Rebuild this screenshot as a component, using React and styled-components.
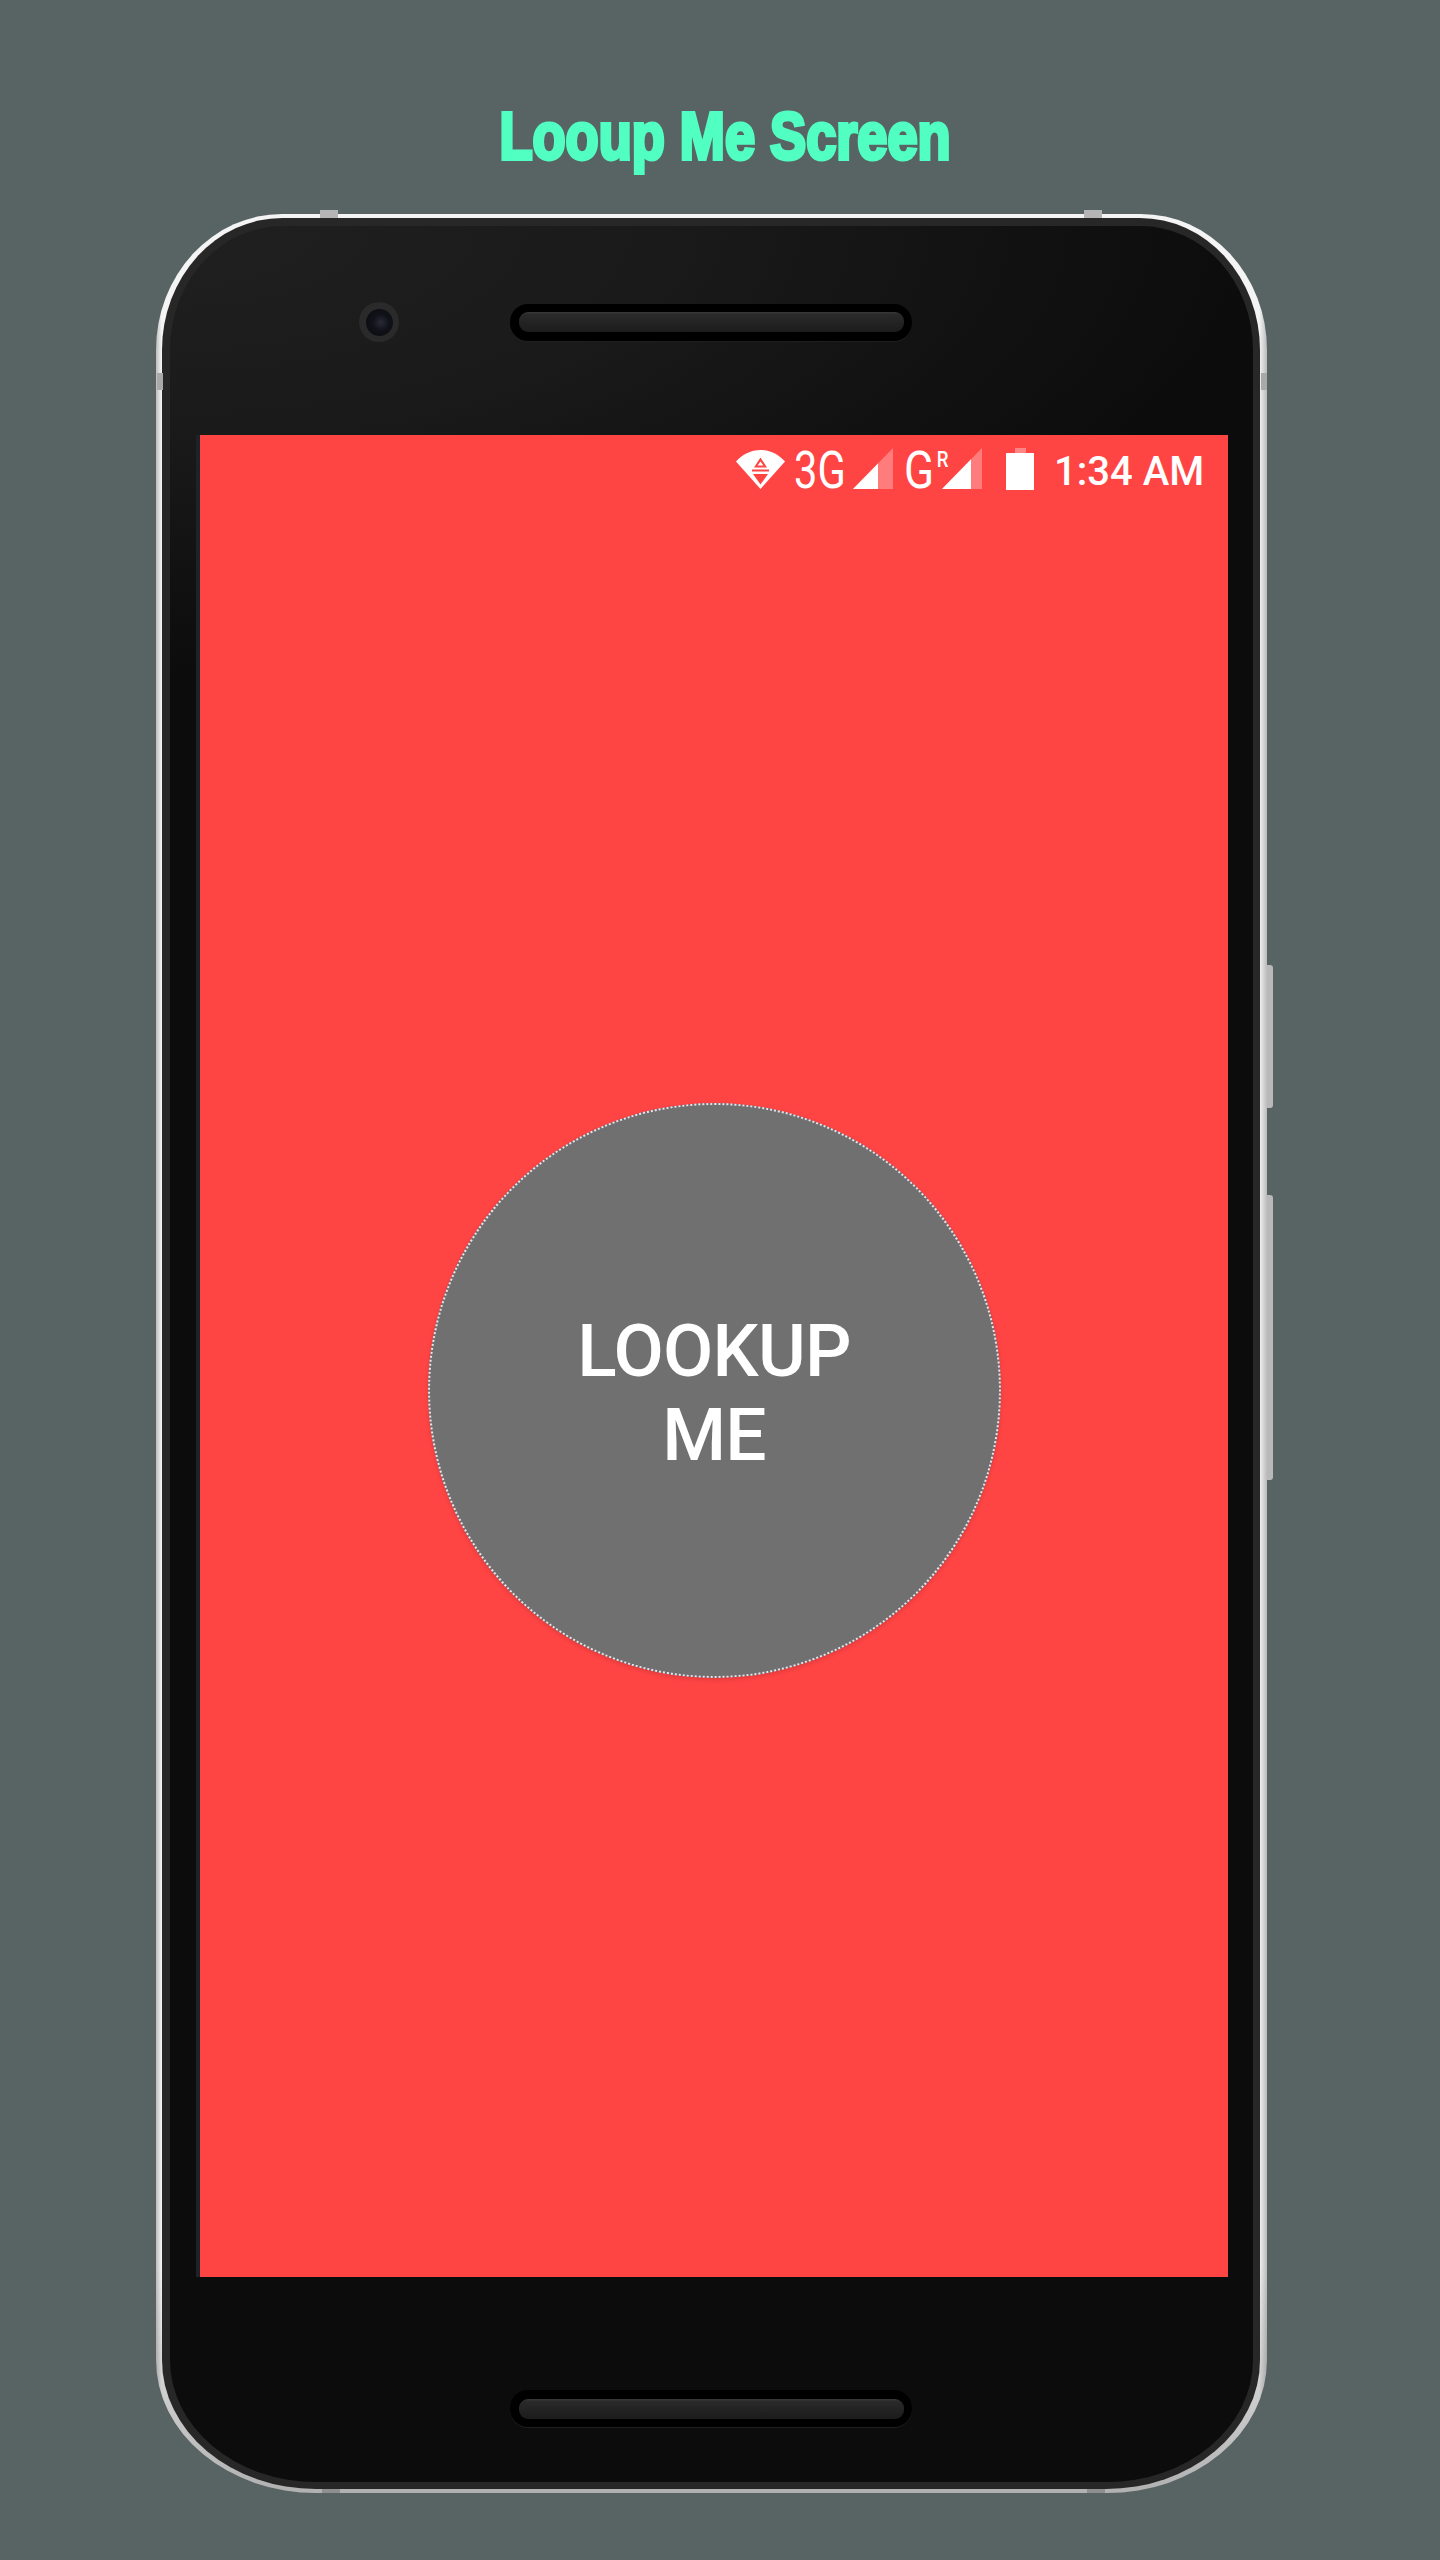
import React from "react";
import styled, { createGlobalStyle } from "styled-components";

const GlobalStyle = createGlobalStyle`
  html, body {
    margin: 0;
    padding: 0;
    background: #586463;
  }
`;

const App = () => {
  return (
    <Page>
      <GlobalStyle />
      <TitleBar>
        <Title>Looup Me Screen</Title>
      </TitleBar>
      <Rim>
        <TopNotch $left={164} />
        <TopNotch $left={928} />
        <BottomNotch $left={166} />
        <BottomNotch $left={931} />
        <SideMark $side="left" />
        <SideMark $side="right" />
        <SideButton $top={751} $height={143} />
        <SideButton $top={981} $height={285} />
        <Ring>
          <Bezel>
            <TopBezel>
              <Camera>
                <Lens />
              </Camera>
              <Speaker>
                <SpeakerGrille />
              </Speaker>
            </TopBezel>
            <Screen>
              <StatusBar>
                <WifiIcon />
                <NetworkLabel>3G</NetworkLabel>
                <SignalIcon split={25} />
                <CarrierLabel>
                  G<sup>R</sup>
                </CarrierLabel>
                <SignalIcon split={29} />
                <Battery>
                  <BatteryCap />
                  <BatteryBody />
                </Battery>
                <Clock>1:34 AM</Clock>
              </StatusBar>
              <Content>
                <LookupButton>
                  LOOKUP
                  <br />
                  ME
                </LookupButton>
              </Content>
            </Screen>
            <BottomBezel>
              <Speaker>
                <SpeakerGrille />
              </Speaker>
            </BottomBezel>
          </Bezel>
        </Ring>
      </Rim>
    </Page>
  );
};

const WifiIcon = () => (
  <WifiSvg viewBox="0 0 49 40">
    <path d="M0 12.5C7 5 15 1 24.5 1S42 5 49 12.5L24.5 40Z" fill="#fff" />
    <path d="M24.5 8.5L31 18.5H18Z" fill="#ff4444" />
    <path d="M24.5 12.5L27.4 16.6H21.6Z" fill="#fff" />
    <path d="M16 21.5H33" stroke="#ff4444" strokeWidth="2" />
    <path d="M17 25H32L24.5 35.5Z" fill="#ff4444" />
  </WifiSvg>
);

const SignalIcon = ({ split }) => (
  <SignalSvg viewBox="0 0 40 41">
    <path d="M0 41L40 0V41Z" fill="#fff" fillOpacity="0.3" />
    <path d={`M0 41L${split} ${41 - split * 1.025}V41Z`} fill="#fff" />
  </SignalSvg>
);

const Page = styled.div`
  width: 1440px;
  height: 2560px;
  overflow: hidden;
  background: #586463;
`;

const TitleBar = styled.div`
  height: 214px;
  display: flex;
  justify-content: center;
  padding: 98px 0 0 10px;
  box-sizing: border-box;
`;

const Title = styled.h1`
  margin: 0;
  height: 76px;
  font-family: "Liberation Sans", sans-serif;
  font-size: 66px;
  line-height: 76px;
  font-weight: 700;
  color: #52ffc2;
  white-space: nowrap;
  -webkit-text-stroke: 4px #52ffc2;
  transform: scaleX(0.82);
`;

const Rim = styled.div`
  position: relative;
  box-sizing: border-box;
  width: 1111px;
  height: 2279px;
  margin-left: 156px;
  padding: 4px 7px 4px 6px;
  border-radius: 126px 126px 160px 160px / 136px 136px 133px 133px;
  background:
    linear-gradient(180deg, rgba(110, 110, 110, 0) 90%, rgba(110, 110, 110, 0.5) 100%),
    linear-gradient(90deg, #bdbdbd 0, #f4f4f4 0.5%, #f4f4f4 99.3%, #bbb 100%);
`;

const Ring = styled.div`
  box-sizing: border-box;
  height: 100%;
  padding: 8px 7px 7px 8px;
  border-radius: 120px 120px 154px 154px / 132px 132px 129px 129px;
  background: #272727;
`;

const Bezel = styled.div`
  height: 100%;
  display: flex;
  flex-direction: column;
  overflow: hidden;
  border-radius: 112px 112px 146px 146px / 124px 124px 122px 122px;
  background:
    radial-gradient(1100px 450px at 0 0, #202020 0, #1a1a1a 45%, #121212 75%, rgba(11, 11, 11, 0) 100%),
    #0c0c0c;
`;

const TopBezel = styled.div`
  box-sizing: border-box;
  height: 209px;
  flex: none;
  display: flex;
  align-items: center;
  padding: 0 0 17px 189px;
`;

const Camera = styled.div`
  box-sizing: border-box;
  width: 40px;
  height: 40px;
  margin-right: 111px;
  display: flex;
  align-items: center;
  justify-content: center;
  border-radius: 50%;
  background: #2a2a2a;
`;

const Lens = styled.div`
  width: 27px;
  height: 27px;
  border-radius: 50%;
  background: radial-gradient(circle at 55% 50%, #2a2a38 0, #12121a 40%, #08080c 100%);
`;

const Speaker = styled.div`
  box-sizing: border-box;
  width: 402px;
  height: 37px;
  display: flex;
  align-items: center;
  justify-content: center;
  border-radius: 18px;
  background: #000;
  box-shadow: 0 1px 0 #1e1e1e;
`;

const SpeakerGrille = styled.div`
  width: 385px;
  height: 20px;
  border-radius: 9px;
  background: linear-gradient(180deg, #3a3a3a 0, #2a2a2a 12%, #222 60%, #1c1c1c 100%);
`;

const Screen = styled.div`
  width: 1028px;
  height: 1842px;
  flex: none;
  margin-left: 30px;
  display: flex;
  flex-direction: column;
  background: #ff4444;
  box-shadow: -4px 0 0 #1e2229;
`;

const StatusBar = styled.div`
  box-sizing: border-box;
  height: 75px;
  flex: none;
  display: flex;
  align-items: flex-start;
  padding: 13px 25px 0 536px;
  color: #fff;
  font-family: Roboto, sans-serif;
`;

const WifiSvg = styled.svg`
  width: 49px;
  height: 40px;
  flex: none;
  margin-top: 1px;
`;

const SignalSvg = styled.svg`
  width: 40px;
  height: 41px;
  flex: none;
`;

const NetworkLabel = styled.span`
  width: 51px;
  margin: 0 8px 0 9px;
  font-size: 52px;
  line-height: 46px;
  font-weight: 400;
  transform: scaleX(0.8);
  transform-origin: left top;
`;

const CarrierLabel = styled.span`
  width: 44px;
  margin: 0 -6px 0 11px;
  font-size: 52px;
  line-height: 46px;
  font-weight: 400;
  white-space: nowrap;
  transform: scaleX(0.85);
  transform-origin: left top;

  sup {
    font-size: 22px;
    line-height: 0;
    font-weight: 500;
    vertical-align: 21px;
    margin-left: 3px;
  }
`;

const Battery = styled.div`
  width: 28px;
  margin: 0 20px 0 24px;
  display: flex;
  flex-direction: column;
  align-items: center;
`;

const BatteryCap = styled.div`
  width: 11px;
  height: 5px;
  background: rgba(255, 255, 255, 0.35);
`;

const BatteryBody = styled.div`
  width: 28px;
  height: 37px;
  background: #fff;
`;

const Clock = styled.span`
  font-size: 40px;
  line-height: 48px;
  font-weight: 500;
  white-space: nowrap;
`;

const Content = styled.div`
  display: flex;
  justify-content: center;
  padding-top: 593px;
`;

const LookupButton = styled.div`
  box-sizing: border-box;
  width: 573px;
  height: 575px;
  padding-top: 5px;
  display: flex;
  align-items: center;
  justify-content: center;
  text-align: center;
  border-radius: 50%;
  border: 2.5px dotted #e8e4ee;
  background: #707070;
  box-shadow: 0 2px 4px rgba(0, 0, 0, 0.12);
  color: #fff;
  font-family: Roboto, sans-serif;
  font-size: 73px;
  line-height: 84px;
  font-weight: 500;
  letter-spacing: -0.8px;
`;

const BottomBezel = styled.div`
  flex: 1;
  padding: 113px 0 0 340px;
`;

const TopNotch = styled.div`
  position: absolute;
  top: -4px;
  left: ${(p) => p.$left}px;
  width: 18px;
  height: 8px;
  background: #b5b5b5;
`;

const BottomNotch = styled.div`
  position: absolute;
  bottom: 0;
  left: ${(p) => p.$left}px;
  width: 18px;
  height: 4px;
  background: #8f8f8f;
`;

const SideMark = styled.div`
  position: absolute;
  top: 159px;
  ${(p) => (p.$side === "left" ? "left: 1px;" : "right: 0;")}
  width: 6px;
  height: 17px;
  background: #a9a9a9;
`;

const SideButton = styled.div`
  position: absolute;
  right: -6px;
  top: ${(p) => p.$top}px;
  width: 6px;
  height: ${(p) => p.$height}px;
  border-radius: 0 3px 3px 0;
  background: #b9b9b9;
`;

export default App;
